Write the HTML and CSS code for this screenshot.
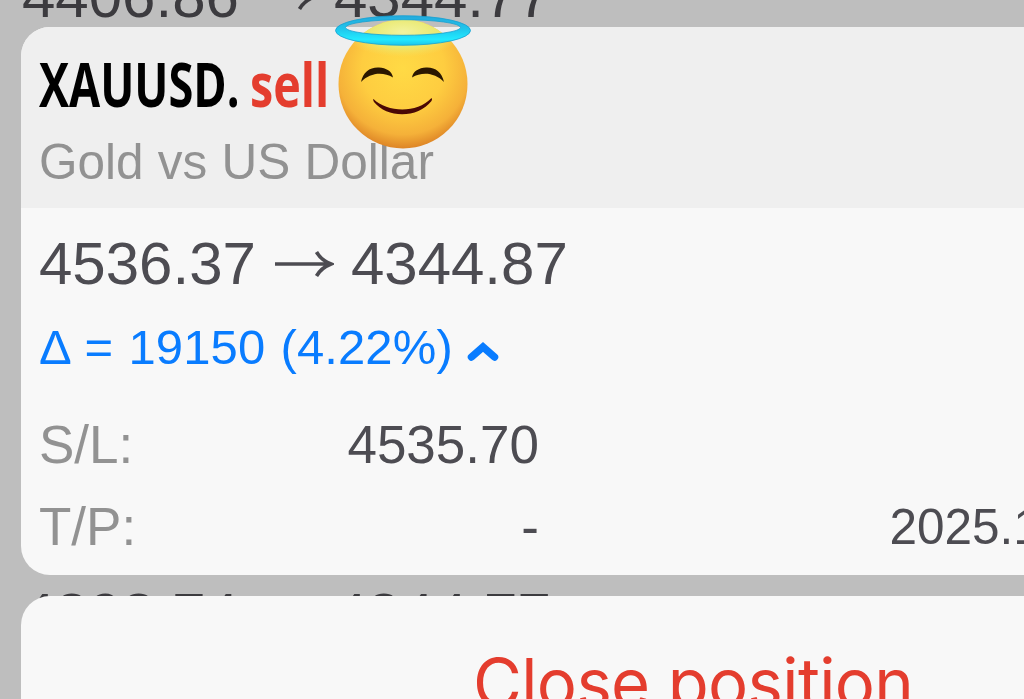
FILE: index.html
```html
<!DOCTYPE html>
<html lang="en">
  <head>
    <meta charset="UTF-8" />
    <meta name="viewport" content="width=device-width, initial-scale=1.0" />
    <title>XAUUSD position</title>
    <link rel="stylesheet" href="styles.css">
  </head>
  <body>
    <div class="history">
      <div class="price-row">
        <span>4406.86</span>
        <svg class="arrow" viewBox="0 0 60 30"><path d="M1 15H56M42.500 3Q47 11 57 15Q47 19 42.500 27" /></svg>
        <span>4344.77</span>
      </div>
      <div class="price-row">
        <span>4398.74</span>
        <svg class="arrow" viewBox="0 0 60 30"><path d="M1 15H56M42.500 3Q47 11 57 15Q47 19 42.500 27" /></svg>
        <span>4344.77</span>
      </div>
    </div>

    <div class="overlay">
      <div class="card">
        <div class="card-header">
          <div class="title">
            <span class="symbol">XAUUSD.</span>
            <span class="side">sell</span>
          </div>
          <div class="description">Gold vs US Dollar</div>
        </div>
        <div class="card-body">
          <div class="price-row">
            <span>4536.37</span>
            <svg class="arrow" viewBox="0 0 60 30"><path d="M1 15H56M42.500 3Q47 11 57 15Q47 19 42.500 27" /></svg>
            <span>4344.87</span>
          </div>
          <div class="delta">
            <span>Δ = 19150 (4.22%)</span>
            <svg class="chevron" viewBox="0 0 32 22"><path d="M4.500 17L16 7L27.500 17" /></svg>
          </div>
          <div class="details">
            <div class="detail-row">
              <span class="label">S/L:</span>
              <span class="value">4535.70</span>
            </div>
            <div class="detail-row">
              <span class="label">T/P:</span>
              <span class="value">-</span>
              <span class="date">2025.1</span>
            </div>
          </div>
        </div>
      </div>

      <div class="card menu">
        <span class="close">Close position</span>
      </div>

      <!-- emoji sticker -->
      <svg class="emoji" viewBox="0 0 140 138">
        <defs>
          <radialGradient id="face" cx="0.5" cy="0.38" r="0.64">
            <stop offset="0" stop-color="#ffda45" />
            <stop offset="0.5" stop-color="#fecd40" />
            <stop offset="0.8" stop-color="#f5b139" />
            <stop offset="1" stop-color="#d97c22" />
          </radialGradient>
          <radialGradient id="glow" cx="0.5" cy="0.5" r="0.5">
            <stop offset="0" stop-color="#f3f3a0" />
            <stop offset="0.6" stop-color="#e6ee78" stop-opacity="0.85" />
            <stop offset="1" stop-color="#f5e060" stop-opacity="0" />
          </radialGradient>
          <clipPath id="head"><circle cx="70" cy="70" r="64.5" /></clipPath>
          <linearGradient id="halo" x1="0" y1="0" x2="0" y2="1">
            <stop offset="0" stop-color="#25a9dc" />
            <stop offset="0.45" stop-color="#1fc6ec" />
            <stop offset="0.8" stop-color="#22eaff" />
            <stop offset="1" stop-color="#1cc4ea" />
          </linearGradient>
        </defs>
        <circle cx="70" cy="70" r="64.5" fill="url(#face)" />
        <ellipse cx="70" cy="18" rx="60" ry="25" fill="url(#glow)" clip-path="url(#head)" />
        <path fill="#2b1700" d="M28 68C30 58 37 53 46 53.500C53 54 59 57 60 63.500C50 57.500 37 58.500 28 68Z" />
        <path fill="#2b1700" d="M111 68C109 58 102 53 93 53.500C86 54 80 57 79 63.500C89 57.500 102 58.500 111 68Z" />
        <path fill="#4a0805" d="M40.500 85C54 98.500 84 99.500 98 84.500C99 84 99.500 85 98.500 87C85 104.500 54 104.500 41 88C40 86 40 85 40.500 85Z" />
        <path fill="url(#halo)" stroke="#189fd0" stroke-width="0.8" fill-rule="evenodd" d="M2.500 16.500A67.500 14.800 0 0 1 137.500 16.500A67.500 14.800 0 0 1 2.500 16.500ZM12.500 13.500A57.500 7.800 0 0 0 127.500 13.500A57.500 7.800 0 0 0 12.500 13.500Z" />
      </svg>
    </div>
  </body>
</html>
```
FILE: styles.css
```css
* {
  box-sizing: border-box;
}

body {
  margin: 0;
  height: 699px;
  overflow: hidden;
  position: relative;
  background-color: #bebebe;
  font-family: "Liberation Sans", Arial, sans-serif;
  color: #4d4c52;
  white-space: nowrap;
}

.history {
  height: 699px;
  overflow: hidden;
  padding-left: 22px;
  color: #3c3b3f;
}

.history .price-row {
  margin-top: -33px;
}

.history .price-row + .price-row {
  margin-top: 558px;
}

.price-row {
  display: flex;
  align-items: center;
  height: 60px;
  font-size: 60px;
  line-height: 60px;
}

.arrow {
  width: 60px;
  height: 30px;
  margin: 0 17px 0 18px;
  fill: none;
  stroke: currentColor;
  stroke-width: 3.6;
}

.overlay {
  position: absolute;
  top: 27px;
  left: 21px;
  right: 0;
  height: 672px;
}

.card {
  height: 547.5px;
  border-radius: 29px 0 0 29px;
  overflow: hidden;
  background-color: #f8f8f8;
}

.card-header {
  height: 181px;
  padding: 27px 18px 0;
  background-color: #efefef;
}

.title {
  display: flex;
  height: 60px;
  font-family: "Open Sans", "Noto Sans", sans-serif;
  font-size: 61px;
  font-weight: 700;
  line-height: 60px;
}

.symbol {
  width: 211px;
  color: #000;
  transform: scaleX(0.74);
  transform-origin: left;
}

.side {
  color: #e43d2e;
  transform: scaleX(0.765);
  transform-origin: left;
}

.description {
  margin-top: 23px;
  font-size: 49.5px;
  line-height: 50px;
  word-spacing: 0.5px;
  color: #929292;
}

.card-body {
  padding: 26px 18px 0;
}

.delta {
  display: flex;
  align-items: center;
  margin-top: 28px;
  font-size: 49px;
  line-height: 50px;
  letter-spacing: 0.1px;
  word-spacing: 1.6px;
  color: #097cff;
}

.chevron {
  width: 32px;
  height: 22px;
  margin: 7px 0 0 14px;
  fill: none;
  stroke: currentColor;
  stroke-width: 7.5;
  stroke-linecap: round;
}

.details {
  display: flex;
  flex-direction: column;
  gap: 22px;
  margin-top: 43px;
}

.detail-row {
  display: grid;
  grid-template-columns: 200px 300px 1fr;
  font-size: 53px;
  line-height: 60px;
}

.label {
  color: #929292;
}

.value {
  text-align: right;
}

.date {
  padding-left: 350.5px;
  font-size: 49.5px;
}

.menu {
  height: 103px;
  margin-top: 21.5px;
  padding: 47px 0 0 452px;
  border-radius: 29px 0 0 0;
}

.close {
  font-family: Inter, sans-serif;
  font-size: 67px;
  line-height: 80px;
  letter-spacing: -0.65px;
  color: #e43d2e;
}

.emoji {
  position: absolute;
  top: -13px;
  left: 312px;
  width: 140px;
  height: 138px;
}
```
